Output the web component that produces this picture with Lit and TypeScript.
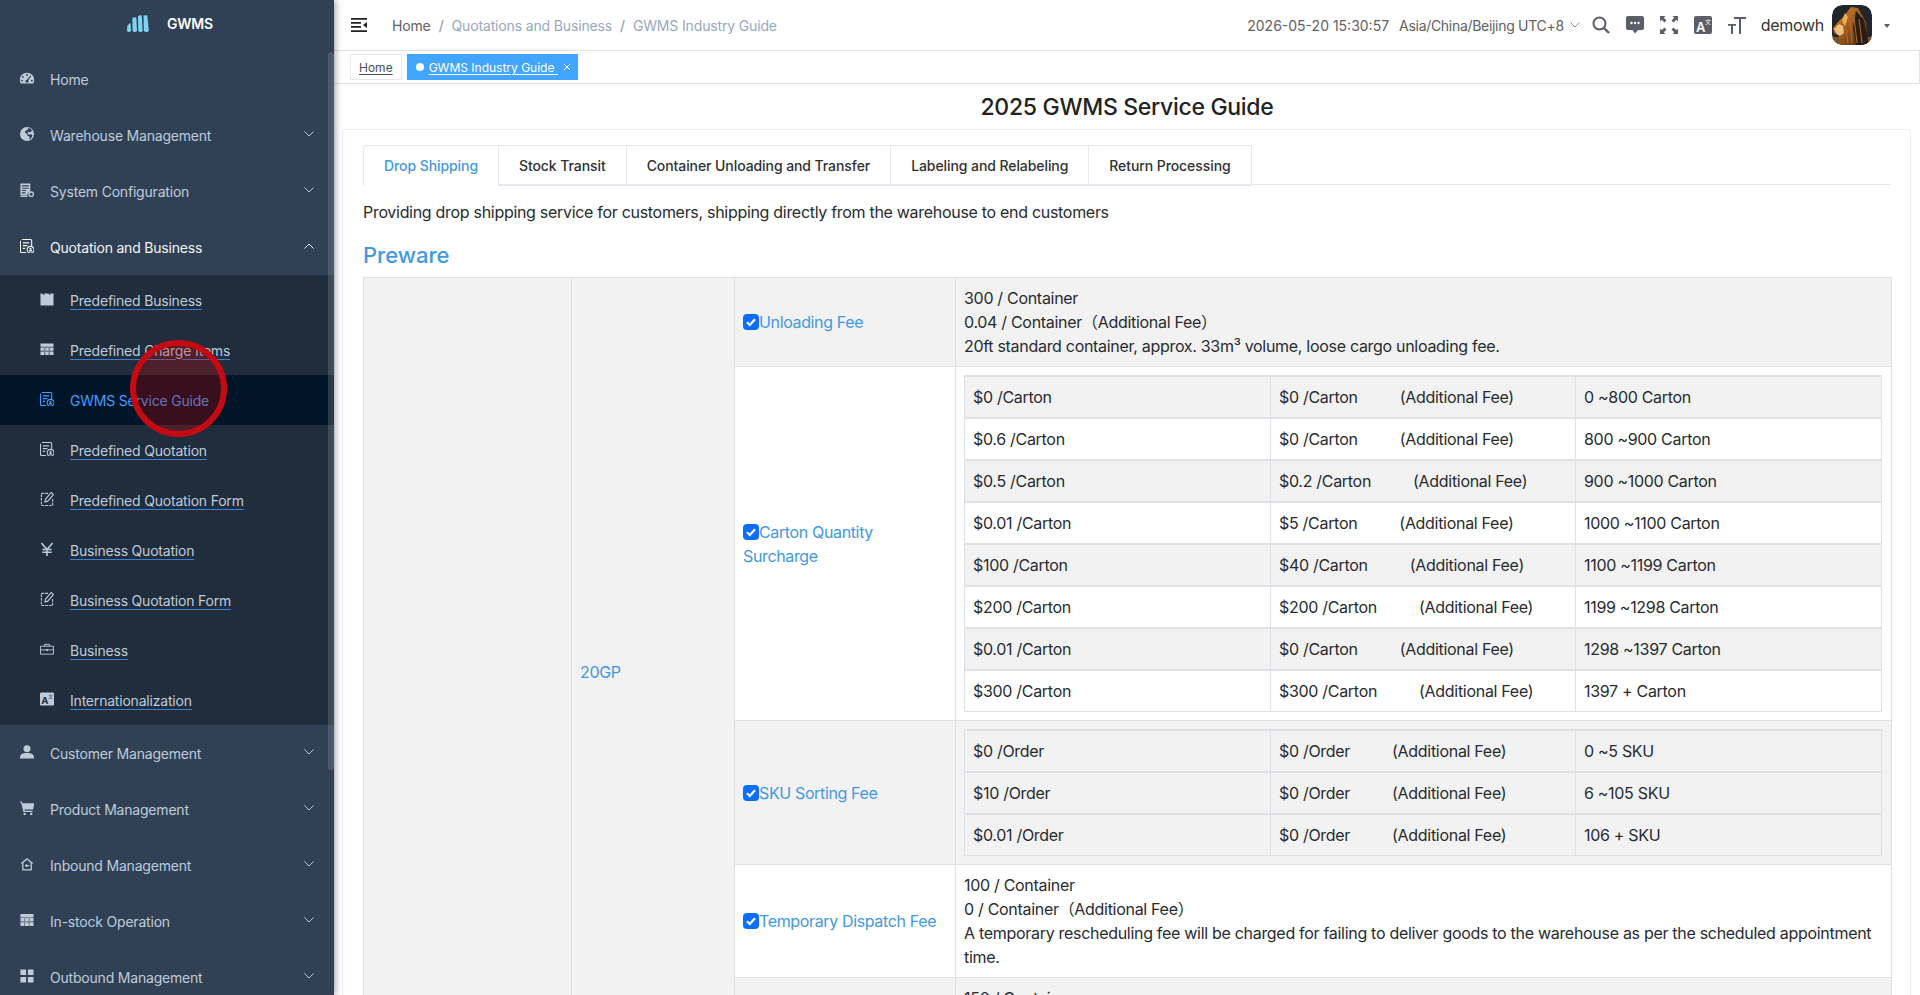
import { LitElement, html, svg, css } from 'lit';
import { customElement } from 'lit/decorators.js';

const ic = (body: unknown) => html`<svg class="ic" viewBox="0.5 0.5 15 15" fill="currentColor">${body}</svg>`;

const doc = svg`<path d="M2.500 1h9A1.500 1.500 0 0 1 13 2.500v5.500M7 15H2.500A1.500 1.500 0 0 1 1 13.500v-11" fill="none" stroke="currentColor" stroke-width="1.200"/><path d="M3.500 4h7v1.200h-7zM3.500 7h5v1.200h-5zM3.500 10h2.500v1.200h-2.500z"/><circle cx="11.800" cy="12" r="3.600" fill="none" stroke="currentColor" stroke-width="1.100"/><circle cx="11.800" cy="11" r="1.200"/><path d="M9.800 14a2 2 0 0 1 4 0z"/>`;
const form = svg`<path d="M9 2H2v13h12V8" fill="none" stroke="currentColor" stroke-width="1.200" stroke-dasharray="3 1"/><path d="M12.500 1l2.300 2.300-6 7-3 .8.700-3z" fill="none" stroke="currentColor" stroke-width="1.200"/>`;

const icons: Record<string, unknown> = {
  gauge: ic(svg`<path fill-rule="evenodd" d="M8 2.300a7.800 7.800 0 0 0-7.800 7.800c0 1.400.4 2.700 1.100 3.700h13.400c.7-1 1.100-2.300 1.100-3.700A7.800 7.800 0 0 0 8 2.300zM8 3.800a1 1 0 1 1 0 2 1 1 0 0 1 0-2zM3.600 5.800a1 1 0 1 1 0 2 1 1 0 0 1 0-2zM2.800 9.800a1 1 0 1 1 0 2 1 1 0 0 1 0-2zM13.200 9.800a1 1 0 1 1 0 2 1 1 0 0 1 0-2zM11.700 5l.9.700-3.200 5a1.600 1.600 0 1 1-1.200-.8z"/>`),
  globe: ic(svg`<circle cx="8" cy="8" r="7.500"/><path fill="#304156" d="M9 1.500l3 1 1.500 2-2 1.500-1.500-.5-1.500 1.200 1 2 3-.5 1.500 1.500-2 3.500-1.500.8.300-3-2.500-1.500-.5-2-2-.8.500-2 3-1.700z"/>`),
  server: ic(svg`<path fill-rule="evenodd" d="M1 1h10.500v8.500a4 4 0 0 0-3 4.500H1zM2.500 3v1.200h7.500V3zM2.500 5.500v1.200h7.500V5.500zM2.500 8v1.200h4.500V8zM2.500 10.500v1.200h4V10.500z"/><path d="M1 14.300h7.500V15.500H1z"/><circle cx="12.500" cy="12.500" r="2.400" fill="none" stroke="currentColor" stroke-width="1.500"/>`),
  doc: ic(doc),
  folder: ic(svg`<path d="M1 2h2.500v1.500h1.500V2h5v1.500h1.500V2H15v13H1z"/>`),
  table: ic(svg`<path fill-rule="evenodd" d="M1 2h14v12.500H1zM1 5.500v.8h14v-.8zM1 10v.8h14V10zM5.300 5.500v9h.8v-9zM9.900 5.500v9h.8v-9z"/>`),
  form: ic(form),
  yen: ic(svg`<path d="M2 1.500l6 7 6-7M8 8v7.500M3 8.500h10M3 11.500h10" fill="none" stroke="currentColor" stroke-width="1.700"/>`),
  case: ic(svg`<path d="M1 5h14v8.500H1zM5.500 5V3h5v2M1 9h6M9 9h6" fill="none" stroke="currentColor" stroke-width="1"/><path d="M7 8h2v2.200H7z"/>`),
  lang: html`<svg class="ic" viewBox="0 0 16 16"><rect x="0" y="0.500" width="16" height="15" rx="1.500" fill="currentColor"/><text x="1.500" y="13.500" font-size="11" font-weight="700" fill="#1f2d3d" font-family="Inter, sans-serif">A</text><text x="9.500" y="7" font-size="5.500" fill="#1f2d3d" font-family="'Noto Sans CJK SC', sans-serif">文</text></svg>`,
  user: ic(svg`<circle cx="8" cy="4.500" r="3.700"/><path d="M.5 15v-1.500c0-3 3-4.500 7.500-4.500s7.500 1.500 7.500 4.500V15z"/>`),
  cart: ic(svg`<path d="M0 1h2.500l.7 2H16l-1.500 6.500H5.200l.3 1.500H14v1.200H4.200L1.700 2.200H0z"/><circle cx="5.500" cy="14.500" r="1.300"/><circle cx="12.500" cy="14.500" r="1.300"/>`),
  inbound: ic(svg`<path d="M8 1.500L.8 7.500h2v7.500h10.400V7.500h2zM4.200 6.700L8 3.500l3.800 3.200v7H4.200z" fill-rule="evenodd"/><path d="M5.500 9.800l2.500-2v1.400h2.500v1.200H8v1.400z"/>`),
  stock: ic(svg`<path fill-rule="evenodd" d="M1 1.500h14v13H1zM1 5v.6h14V5zM1 9.700v.6h14v-.6zM5.300 5v9.500h.6V5zM10 5v9.500h.6V5z"/>`),
  apps: ic(svg`<path d="M1 1h6v6H1zM9 1h6v6H9zM1 9h6v6H1zM9 9h6v6H9z"/>`),
};

const chevron = (up: boolean) => html`<svg class="chev" viewBox="0 0 10 6"><path d=${up ? 'M.5 5.500L5 1l4.500 4.500' : 'M.5.500L5 5l4.500-4.500'} fill="none" stroke="currentColor" stroke-width="1"/></svg>`;

const topMenus = [
  ['Home', 'gauge', false],
  ['Warehouse Management', 'globe', true],
  ['System Configuration', 'server', true],
];
const subMenus = [
  ['Predefined Business', 'folder'],
  ['Predefined Charge Items', 'table'],
  ['GWMS Service Guide', 'doc'],
  ['Predefined Quotation', 'doc'],
  ['Predefined Quotation Form', 'form'],
  ['Business Quotation', 'yen'],
  ['Business Quotation Form', 'form'],
  ['Business', 'case'],
  ['Internationalization', 'lang'],
];
const lowerMenus = [
  ['Customer Management', 'user'],
  ['Product Management', 'cart'],
  ['Inbound Management', 'inbound'],
  ['In-stock Operation', 'stock'],
  ['Outbound Management', 'apps'],
];

const cartonRows = [
  ['$0 /Carton', '$0 /Carton', '0 ~800 Carton'],
  ['$0.6 /Carton', '$0 /Carton', '800 ~900 Carton'],
  ['$0.5 /Carton', '$0.2 /Carton', '900 ~1000 Carton'],
  ['$0.01 /Carton', '$5 /Carton', '1000 ~1100 Carton'],
  ['$100 /Carton', '$40 /Carton', '1100 ~1199 Carton'],
  ['$200 /Carton', '$200 /Carton', '1199 ~1298 Carton'],
  ['$0.01 /Carton', '$0 /Carton', '1298 ~1397 Carton'],
  ['$300 /Carton', '$300 /Carton', '1397 + Carton'],
];
const skuRows = [
  ['$0 /Order', '$0 /Order', '0 ~5 SKU'],
  ['$10 /Order', '$0 /Order', '6 ~105 SKU'],
  ['$0.01 /Order', '$0 /Order', '106 + SKU'],
];

@customElement('app-root')
export class AppRoot extends LitElement {
  static styles = css`
    :host {
      display: flex;
      position: relative;
      width: 1920px;
      height: 995px;
      overflow: hidden;
      background: #fff;
      color: #303133;
      font-family: Inter, 'Noto Sans CJK SC', sans-serif;
      font-size: 14px;
    }

    /* sidebar */
    .side {
      position: relative;
      flex: 0 0 334px;
      height: 995px;
      overflow: hidden;
      background: #304156;
      box-shadow: 2px 0 6px rgba(0, 21, 41, 0.35);
      z-index: 2;
      color: #bfcbd9;
      letter-spacing: -0.2px;
    }
    .logo {
      display: flex;
      align-items: center;
      justify-content: center;
      gap: 18px;
      height: 51px;
      padding-left: 6px;
      padding-bottom: 4px;
      box-sizing: border-box;
      color: #fff;
      font-weight: 600;
    }
    .logo svg {
      width: 22px;
      height: 17px;
    }
    .item {
      display: flex;
      align-items: center;
      height: 56px;
      padding: 0 20px;
      box-sizing: border-box;
    }
    .item.open {
      color: #f4f4f5;
    }
    .ic {
      flex: none;
      width: 14px;
      height: 14px;
      margin-right: 16px;
      margin-top: -2px;
    }
    .chev {
      width: 10px;
      height: 6px;
      margin-left: auto;
      margin-top: -2px;
    }
    .subs {
      background: #1f2d3d;
    }
    .sub {
      display: flex;
      align-items: center;
      height: 50px;
      padding-left: 40px;
    }
    .sub span {
      text-decoration: underline;
      text-decoration-color: #3c7fd3;
      text-underline-offset: 3px;
    }
    .sub.active {
      background: #001528;
      color: #409eff;
    }
    .sub.active span {
      text-decoration: none;
    }
    .thumb {
      position: absolute;
      right: 0;
      top: 52px;
      width: 6px;
      height: 718px;
      border-radius: 3px;
      background: rgba(144, 147, 153, 0.3);
    }
    .mark {
      position: absolute;
      left: 130px;
      top: 340px;
      width: 97px;
      height: 97px;
      box-sizing: border-box;
      border: 6px solid #c40a12;
      border-radius: 50%;
      background: rgba(200, 0, 0, 0.28);
      z-index: 3;
    }

    /* main */
    .main {
      flex: 1;
      min-width: 0;
      height: 995px;
      overflow: hidden;
    }
    .top {
      display: flex;
      align-items: center;
      height: 51px;
      box-sizing: border-box;
      border-bottom: 1px solid #dfe2e6;
      padding: 0 30px 0 17px;
      color: #606266;
    }
    .burger {
      width: 16px;
      height: 16px;
      margin-right: 25px;
      color: #222;
    }
    .crumb {
      display: flex;
      gap: 8px;
      color: #97a8be;
      letter-spacing: -0.15px;
    }
    .crumb b {
      font-weight: 400;
    }
    .crumb .home {
      color: #606266;
    }
    .crumb i {
      font-style: normal;
      color: #8a8f98;
    }
    .right {
      display: flex;
      align-items: center;
      margin-left: auto;
    }
    .tz {
      margin-left: 10px;
      letter-spacing: -0.3px;
    }
    .tz-chev {
      width: 10px;
      height: 6px;
      margin-left: 6px;
      color: #8a8f98;
    }
    .tool {
      width: 18px;
      height: 18px;
      color: #5a5e66;
      margin-left: 16px;
    }
    .tool.first {
      margin-left: 12px;
    }
    .user {
      margin-left: 15px;
      font-size: 16px;
      letter-spacing: -0.3px;
      color: #333;
    }
    .avatar {
      width: 40px;
      height: 40px;
      border-radius: 10px;
      margin-left: 8px;
    }
    .caret {
      width: 0;
      height: 0;
      margin-left: 12px;
      margin-top: 2px;
      border: 3px solid transparent;
      border-top: 4px solid #5a5e66;
      border-bottom: 0;
    }
    .tags {
      display: flex;
      align-items: center;
      gap: 5px;
      height: 33px;
      box-sizing: border-box;
      padding-left: 16px;
      border-bottom: 1px solid #dfe2e6;
      border-right: 1px solid #dfe2e6;
      font-size: 12px;
    }
    .tag {
      display: flex;
      align-items: center;
      height: 26px;
      box-sizing: border-box;
      padding: 0 8px;
      border: 1px solid #e6e8eb;
      color: #495060;
    }
    .tag u {
      text-underline-offset: 2px;
    }
    .tag.on {
      background: #42a5ff;
      border-color: #42a5ff;
      color: #fff;
      padding-right: 6px;
    }
    .tag .dot {
      width: 8px;
      height: 8px;
      margin-right: 5px;
      border-radius: 50%;
      background: #fff;
    }
    .tag .x {
      width: 8px;
      height: 8px;
      margin-left: 5px;
    }
    .title {
      height: 45px;
      line-height: 47px;
      text-align: center;
      font-size: 23px;
      letter-spacing: -0.3px;
      font-weight: 500;
      color: #222;
    }
    .card {
      margin: 0 9px 0 8px;
      padding: 15px 19px 0 20px;
      border: 1px solid #ebeef5;
      border-radius: 4px;
      color: #272b30;
    }
    .tabs {
      display: flex;
      height: 40px;
      box-sizing: border-box;
      border-bottom: 1px solid #e4e7ed;
      letter-spacing: -0.08px;
    }
    .tab {
      height: 39px;
      line-height: 39px;
      padding: 0 20px;
      border: 1px solid #e4e7ed;
      border-left: 0;
      font-weight: 500;
      color: #303133;
    }
    .tab:first-child {
      border-left: 1px solid #e4e7ed;
      border-top-left-radius: 4px;
      color: #4299e1;
      height: 40px;
      border-bottom: 0;
      background: #fff;
    }
    .desc {
      margin: 15px 0 16px;
      font-size: 16px;
      line-height: 24px;
      letter-spacing: -0.3px;
    }
    h3 {
      margin: 0 0 8px;
      padding-top: 1px;
      height: 28px;
      font-size: 22px;
      line-height: 29px;
      font-weight: 500;
      color: #4299e1;
    }
    table {
      border-collapse: collapse;
      table-layout: fixed;
      font-size: 16px;
      line-height: 24px;
      letter-spacing: -0.3px;
    }
    .guide {
      width: 1528px;
    }
    td {
      padding: 8px;
      border: 1px solid #dee2e6;
      vertical-align: middle;
    }
    .grey > td,
    td.grey {
      background: #f2f2f2;
    }
    a {
      color: #4299e1;
      letter-spacing: -0.36px;
    }
    .check {
      display: inline-flex;
      vertical-align: -2px;
      width: 16px;
      height: 16px;
      border-radius: 4px;
      background: #0d6efd;
    }
    .check svg {
      width: 16px;
      height: 16px;
    }
    .inner {
      width: 917px;
    }
    .inner td {
      height: 24px;
      border-top-width: 2px;
    }
    .inner tr:first-child td {
      border-top-width: 1px;
    }
    .add {
      margin-left: 42px;
    }
  `;

  private price(rows: string[][]) {
    return html`<table class="inner">
      <colgroup><col style="width:306px" /><col style="width:305px" /><col style="width:306px" /></colgroup>
      ${rows.map(
        (r, i) => html`<tr class=${i % 2 === 0 ? 'grey' : ''}>
          <td>${r[0]}</td>
          <td>${r[1]}<span class="add">(Additional Fee)</span></td>
          <td>${r[2]}</td>
        </tr>`,
      )}
    </table>`;
  }

  private fee(name: string) {
    return html`<span class="check"><svg viewBox="0 0 16 16"><path d="M4 8.300l2.800 2.700L12 5.300" fill="none" stroke="#fff" stroke-width="2.200"/></svg></span><a>${name}</a>`;
  }

  private sidebar() {
    return html`<aside class="side">
      <div class="logo">
        <svg viewBox="0 0 22 17" fill="#7fd3f0">
          <path d="M.3 11q1.500-2.500 3.200-3l.5 7.500q-.3 1.500-2 1.500t-2-1.500z" />
          <path d="M5.300 3q2-1 4-.5l.700 13q-.3 1.500-2.200 1.500t-2.200-1.500z" />
          <path d="M11 1q2-1 3.700-.7l1 15.200q-.3 1.500-2.200 1.500t-2.200-1.500z" />
          <path d="M16.500.500q2-.7 3.800 0l1.500 15q-.3 1.500-2.500 1.500t-2.400-1.500z" />
        </svg>
        <span>GWMS</span>
      </div>
      ${topMenus.map(
        ([name, icon, more]) => html`<div class="item">
          ${icons[icon as string]}<span>${name}</span>${more ? chevron(false) : ''}
        </div>`,
      )}
      <div class="item open">${icons.doc}<span>Quotation and Business</span>${chevron(true)}</div>
      <div class="subs">
        ${subMenus.map(
          ([name, icon]) => html`<div class="sub ${name === 'GWMS Service Guide' ? 'active' : ''}">
            ${icons[icon]}<span>${name}</span>
          </div>`,
        )}
      </div>
      ${lowerMenus.map(
        ([name, icon]) => html`<div class="item">${icons[icon]}<span>${name}</span>${chevron(false)}</div>`,
      )}
      <div class="thumb"></div>
    </aside>`;
  }

  private header() {
    return html`<header class="top">
      <svg class="burger" viewBox="0 0 16 16">
        <path d="M0 1h16v1.800H0zM0 5h10v1.800H0zM0 9h10v1.800H0zM0 13.200h16V15H0z" fill="currentColor" />
        <path d="M16 5v6l-4-3z" fill="currentColor" />
      </svg>
      <div class="crumb">
        <b class="home">Home</b><i>/</i><b>Quotations and Business</b><i>/</i><b>GWMS Industry Guide</b>
      </div>
      <div class="right">
        <span>2026-05-20 15:30:57</span>
        <span class="tz">Asia/China/Beijing UTC+8</span>
        <svg class="tz-chev" viewBox="0 0 10 6"><path d="M.5.500L5 5l4.500-4.500" fill="none" stroke="currentColor" /></svg>
        <svg class="tool first" viewBox="0 0 18 18">
          <circle cx="7.500" cy="7.500" r="6" fill="none" stroke="currentColor" stroke-width="2" />
          <path d="M12 12l5 5" stroke="currentColor" stroke-width="2.400" />
        </svg>
        <svg class="tool" viewBox="0 0 18 18">
          <path d="M2 0h14a2 2 0 0 1 2 2v10a2 2 0 0 1-2 2h-4l-3 3.500L6.500 14H2a2 2 0 0 1-2-2V2a2 2 0 0 1 2-2z" fill="currentColor" />
          <circle cx="5.500" cy="7" r="1.200" fill="#fff" /><circle cx="9" cy="7" r="1.200" fill="#fff" /><circle cx="12.500" cy="7" r="1.200" fill="#fff" />
        </svg>
        <svg class="tool" viewBox="0 0 18 18" fill="currentColor">
          <path d="M0 0h5.500L3.800 1.700 6.500 4.400 4.400 6.500 1.700 3.800 0 5.500zM18 0v5.500l-1.700-1.700-2.700 2.700-2.100-2.100 2.700-2.700L12.500 0zM0 18v-5.500l1.700 1.700 2.700-2.700 2.100 2.100-2.700 2.700L5.500 18zM18 18h-5.500l1.700-1.700-2.700-2.700 2.100-2.100 2.700 2.700 1.700-1.700z" />
        </svg>
        <svg class="tool" viewBox="0 0 18 18">
          <rect width="18" height="18" rx="2" fill="currentColor" />
          <text x="2" y="15.500" font-size="13" font-weight="600" fill="#fff" font-family="Inter, sans-serif">A</text>
          <text x="11" y="8" font-size="6" fill="#fff" font-family="'Noto Sans CJK SC', sans-serif">文</text>
        </svg>
        <svg class="tool" viewBox="0 0 18 18" fill="currentColor">
          <path d="M6 1h12v2h-5v15h-2V3H6zM0 8h8v1.800H5V18H3V9.800H0z" />
        </svg>
        <span class="user">demowh</span>
        <svg class="avatar" viewBox="0 0 40 40">
          <defs>
            <linearGradient id="mane" x1="0" y1="0" x2="1" y2="1">
              <stop offset="0" stop-color="#dc9236" />
              <stop offset="0.55" stop-color="#93521b" />
              <stop offset="1" stop-color="#4a2c12" />
            </linearGradient>
            <clipPath id="av"><rect width="40" height="40" rx="10" /></clipPath>
          </defs>
          <g clip-path="url(#av)">
            <rect width="40" height="40" fill="#22252c" />
            <rect y="32" width="40" height="8" fill="#7a5526" />
            <path d="M19 2l7 1 8 14 2 23H8l-1-9-5-3-1-5 6-7 5-5z" fill="url(#mane)" />
            <path d="M24 6l8 9 5 25H24l-3-18z" fill="#2a1c12" />
            <path d="M22 12l3 26M27 14l3 24M18 14l2 24M14 24l2 14" stroke="#b76e25" stroke-width="1" fill="none" />
            <path d="M2 24l5-5 4 2 1 7-4 3-3-2z" fill="#efc07a" />
            <path d="M13 8l-3 8 3 5 3-9z" fill="#f0b050" />
          </g>
        </svg>
        <span class="caret"></span>
      </div>
    </header>
    <nav class="tags">
      <div class="tag"><u>Home</u></div>
      <div class="tag on">
        <span class="dot"></span><u>GWMS Industry Guide&nbsp;</u>
        <svg class="x" viewBox="0 0 8 8"><path d="M1 1l6 6M7 1L1 7" stroke="#fff" stroke-width="1" /></svg>
      </div>
    </nav>`;
  }

  private guide() {
    return html`<table class="guide">
      <colgroup>
        <col style="width:208px" /><col style="width:163px" /><col style="width:221px" /><col style="width:936px" />
      </colgroup>
      <tr class="grey">
        <td rowspan="5" class="grey"></td>
        <td rowspan="5" class="grey"><a>20GP</a></td>
        <td>${this.fee('Unloading Fee')}</td>
        <td>
          300 / Container<br />
          0.04 / Container（Additional Fee）<br />
          20ft standard container, approx. 33m³ volume, loose cargo unloading fee.
        </td>
      </tr>
      <tr>
        <td>${this.fee('Carton Quantity Surcharge')}</td>
        <td>${this.price(cartonRows)}</td>
      </tr>
      <tr class="grey">
        <td>${this.fee('SKU Sorting Fee')}</td>
        <td>${this.price(skuRows)}</td>
      </tr>
      <tr>
        <td>${this.fee('Temporary Dispatch Fee')}</td>
        <td>
          100 / Container<br />
          0 / Container（Additional Fee）<br />
          A temporary rescheduling fee will be charged for failing to deliver goods to the warehouse as per the
          scheduled appointment time.
        </td>
      </tr>
      <tr class="grey">
        <td></td>
        <td>150 / Container<br />0 / Container（Additional Fee）<br />&nbsp;</td>
      </tr>
    </table>`;
  }

  render() {
    return html`
      ${this.sidebar()}
      <main class="main">
        ${this.header()}
        <div class="title">2025 GWMS Service Guide</div>
        <section class="card">
          <div class="tabs">
            <div class="tab">Drop Shipping</div>
            <div class="tab">Stock Transit</div>
            <div class="tab">Container Unloading and Transfer</div>
            <div class="tab">Labeling and Relabeling</div>
            <div class="tab">Return Processing</div>
          </div>
          <p class="desc">Providing drop shipping service for customers, shipping directly from the warehouse to end customers</p>
          <h3>Preware</h3>
          ${this.guide()}
        </section>
      </main>
      <div class="mark"></div>
    `;
  }
}
